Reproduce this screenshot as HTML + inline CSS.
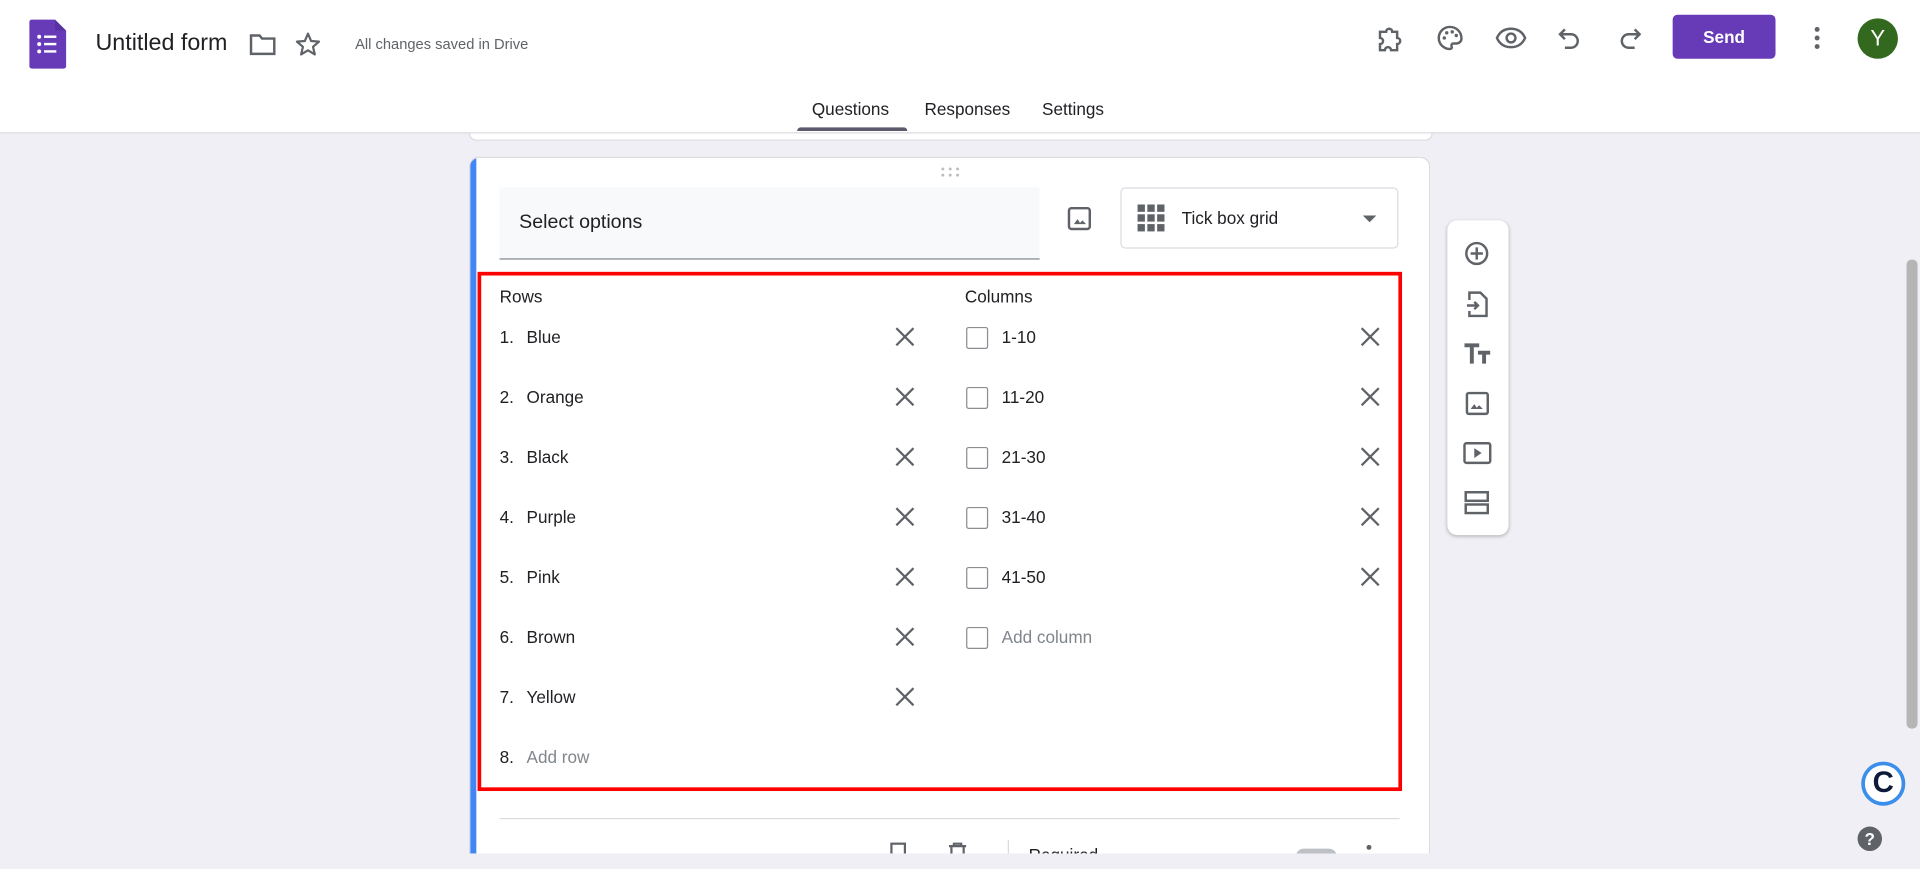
<!DOCTYPE html>
<html><head><meta charset="utf-8"><style>
html,body{margin:0;padding:0;width:1920px;height:869px;overflow:hidden;background:#f0eff5;font-family:"Liberation Sans",Arial,sans-serif;}
#w{position:absolute;left:0;top:0;width:1568px;height:710px;overflow:hidden;transform:scale(1.22449);transform-origin:0 0;}
.a{position:absolute}
.t{color:#202124;font-size:14px}
svg{position:absolute;overflow:visible}
.x{stroke:#5f6368;stroke-width:1.8;fill:none}
.cb{position:absolute;width:16px;height:16px;border:1.5px solid #8a8d91;border-radius:2px;box-sizing:border-box}
</style></head><body><div id="w">
<div class="a" style="left:0;top:0;width:1568px;height:108px;background:#fff;border-bottom:1px solid #dadce0"></div>
<svg style="left:24px;top:16px" width="30" height="40"><path d="M2 0H21L30 9V38a2 2 0 0 1-2 2H2a2 2 0 0 1-2-2V2a2 2 0 0 1 2-2z" fill="#673ab7"/><path d="M21 0V9H30z" fill="#4a2a8a" opacity=".5"/><g fill="#fff"><circle cx="8" cy="14" r="1.6"/><circle cx="8" cy="20" r="1.6"/><circle cx="8" cy="26" r="1.6"/><rect x="12" y="13" width="10" height="2"/><rect x="12" y="19" width="10" height="2"/><rect x="12" y="25" width="10" height="2"/></g></svg>
<div class="a" style="left:78px;top:25px;font-size:19px;color:#202124">Untitled form</div>
<svg style="left:204px;top:27px" width="22" height="18"><path d="M1 2h7l2 2.5h10v12.5H1z" fill="none" stroke="#5f6368" stroke-width="2"/></svg>
<svg style="left:241px;top:26px" width="21" height="20"><path d="M10.5 1.5l2.6 6 6.4.5-4.9 4.2 1.5 6.3-5.6-3.4-5.6 3.4 1.5-6.3L1.5 8l6.4-.5z" fill="none" stroke="#5f6368" stroke-width="1.8" stroke-linejoin="round"/></svg>
<div class="a" style="left:290px;top:29px;font-size:12px;color:#5f6368">All changes saved in Drive</div>
<svg style="left:1124px;top:20px" width="22" height="22"><path d="M3 6h5a2.5 2.5 0 0 1 5 0h4v5a2.5 2.5 0 0 1 0 5v5h-5a2.5 2.5 0 0 0-5 0H3v-5a2.5 2.5 0 0 0 0-5z" fill="none" stroke="#5f6368" stroke-width="2"/></svg>
<svg style="left:1173px;top:20px" width="22" height="22"><path d="M11 2a9 9 0 0 0 0 18c1.5 0 2-1 1.5-2s0-2.5 1.5-2.5h2.5a4 4 0 0 0 4-4C20.5 5.5 16 2 11 2z" fill="none" stroke="#5f6368" stroke-width="2"/><g fill="#5f6368"><circle cx="6.5" cy="11" r="1.4"/><circle cx="8.5" cy="6.8" r="1.4"/><circle cx="13" cy="6" r="1.4"/><circle cx="16.3" cy="9" r="1.4"/></g></svg>
<svg style="left:1221px;top:22px" width="26" height="18"><path d="M1.5 9C4 3.5 8 1.5 13 1.5s9 2 11.5 7.5C22 14.5 18 16.5 13 16.5S4 14.5 1.5 9z" fill="none" stroke="#5f6368" stroke-width="2"/><circle cx="13" cy="9" r="3.6" fill="none" stroke="#5f6368" stroke-width="2"/></svg>
<svg style="left:1272px;top:21px" width="20" height="20"><path d="M6 3L2 7l4 4M2 7h9a5.5 5.5 0 0 1 0 11H6" fill="none" stroke="#5f6368" stroke-width="2"/></svg>
<svg style="left:1321px;top:21px" width="20" height="20"><path d="M14 3l4 4-4 4M18 7H9a5.5 5.5 0 0 0 0 11h5" fill="none" stroke="#5f6368" stroke-width="2"/></svg>
<div class="a" style="left:1366px;top:12px;width:84px;height:36px;background:#673ab7;border-radius:4px;color:#fff;font-size:14px;font-weight:bold;text-align:center;line-height:36px">Send</div>
<svg style="left:1482px;top:21px" width="4" height="20"><circle cx="2" cy="3" r="2" fill="#5f6368"/><circle cx="2" cy="10" r="2" fill="#5f6368"/><circle cx="2" cy="17" r="2" fill="#5f6368"/></svg>
<div class="a" style="left:1517px;top:15px;width:33px;height:33px;border-radius:50%;background:#33691e;color:#fff;font-size:18px;text-align:center;line-height:33px">Y</div>
<div class="a" style="left:663px;top:81px;font-size:14px;color:#202124">Questions</div>
<div class="a" style="left:755px;top:81px;font-size:14px;color:#202124">Responses</div>
<div class="a" style="left:851px;top:81px;font-size:14px;color:#202124">Settings</div>
<div class="a" style="left:651px;top:104px;width:90px;height:3px;background:#5e5a6e;border-radius:3px 3px 0 0"></div>
<div class="a" style="left:383px;top:109px;width:785px;height:5px;background:#fff;border-radius:0 0 8px 8px;border:1px solid #dadce0;border-top:none"></div>
<div class="a" style="left:383px;top:128px;width:785px;height:569px;background:#fff;border-radius:8px 8px 0 0;border:1px solid #dadce0;border-bottom:none;box-sizing:border-box;overflow:hidden"><div style="position:absolute;left:0;top:0;width:5px;height:100%;background:#4285f4"></div></div>
<svg style="left:768px;top:136px" width="16" height="8"><g fill="#bdbdbd"><circle cx="2" cy="2" r="1.2"/><circle cx="8" cy="2" r="1.2"/><circle cx="14" cy="2" r="1.2"/><circle cx="2" cy="7" r="1.2"/><circle cx="8" cy="7" r="1.2"/><circle cx="14" cy="7" r="1.2"/></g></svg>
<div class="a" style="left:408px;top:153px;width:441px;height:58px;background:#f8f9fa;border-bottom:1px solid #80868b"></div>
<div class="a" style="left:424px;top:173px;font-size:16px;color:#202124">Select options</div>
<svg style="left:872px;top:169px" width="19" height="19"><rect x="1" y="1" width="17" height="17" rx="2" fill="none" stroke="#5f6368" stroke-width="2"/><path d="M5 14l3-4 2 3 2-2 3 3z" fill="#5f6368"/></svg>
<div class="a" style="left:915px;top:153px;width:227px;height:50px;border:1px solid #dadce0;border-radius:4px;box-sizing:border-box"></div>
<svg style="left:929px;top:167px" width="22" height="22"><g fill="#5f6368"><rect x="0" y="0" width="6" height="6"/><rect x="8" y="0" width="6" height="6"/><rect x="16" y="0" width="6" height="6"/><rect x="0" y="8" width="6" height="6"/><rect x="8" y="8" width="6" height="6"/><rect x="16" y="8" width="6" height="6"/><rect x="0" y="16" width="6" height="6"/><rect x="8" y="16" width="6" height="6"/><rect x="16" y="16" width="6" height="6"/></g></svg>
<div class="a" style="left:965px;top:170px;font-size:14px;color:#202124">Tick box grid</div>
<svg style="left:1113px;top:176px" width="12" height="6"><path d="M0 0h11L5.5 5.5z" fill="#5f6368"/></svg>
<div class="a" style="left:390px;top:222px;width:755px;height:424px;border:3px solid #f00;box-sizing:border-box"></div>
<div class="a t" style="left:408px;top:234px">Rows</div>
<div class="a t" style="left:788px;top:234px">Columns</div>
<div id="rows"></div>
<div class="a" style="left:408px;top:668px;width:735px;height:1px;background:#dadce0"></div>
<svg style="left:724px;top:688px" width="18" height="12"><rect x="4" y="1" width="11" height="14" fill="none" stroke="#5f6368" stroke-width="1.8"/></svg>
<svg style="left:773px;top:688px" width="18" height="12"><path d="M2 3h14M6 3V1h6v2M4 3v12h10V3" fill="none" stroke="#5f6368" stroke-width="1.8"/></svg>
<div class="a" style="left:823px;top:686px;width:1px;height:20px;background:#dadce0"></div>
<div class="a t" style="left:840px;top:690px">Required</div>
<div class="a" style="left:1058px;top:693px;width:34px;height:14px;border-radius:7px;background:#bdc1c6"></div>
<div class="a" style="left:1116px;top:690px;width:4px;height:4px;border-radius:50%;background:#5f6368"></div>
<div class="a" style="left:1182px;top:180px;width:50px;height:257px;background:#fff;border-radius:8px;box-shadow:0 1px 3px rgba(0,0,0,.25)"></div>
<svg style="left:1196px;top:197px" width="20" height="20"><circle cx="10" cy="10" r="8.5" fill="none" stroke="#5f6368" stroke-width="2"/><path d="M10 5v10M5 10h10" stroke="#5f6368" stroke-width="2"/></svg>
<svg style="left:1198px;top:238px" width="17" height="21"><path d="M2 7V1h9l5 5v14H2v-4" fill="none" stroke="#5f6368" stroke-width="2"/><path d="M0 11.5h9M6 8.5l3 3-3 3" fill="none" stroke="#5f6368" stroke-width="2"/></svg>
<svg style="left:1196px;top:281px" width="22" height="16"><path d="M0 1h12M6 1v15M11 7h10M16 7v9" stroke="#5f6368" stroke-width="3.2" fill="none"/></svg>
<svg style="left:1197px;top:320px" width="19" height="19"><rect x="1" y="1" width="17" height="17" rx="1.5" fill="none" stroke="#5f6368" stroke-width="2"/><path d="M4 14l3-4 2 3 2-2 3 3z" fill="#5f6368"/></svg>
<svg style="left:1195px;top:361px" width="23" height="18"><rect x="1" y="1" width="21" height="16" rx="1.5" fill="none" stroke="#5f6368" stroke-width="2"/><path d="M9 5v8l6-4z" fill="#5f6368"/></svg>
<svg style="left:1196px;top:401px" width="20" height="20"><rect x="1" y="1" width="18" height="7" fill="none" stroke="#5f6368" stroke-width="2"/><rect x="1" y="11" width="18" height="7" fill="none" stroke="#5f6368" stroke-width="2"/></svg>
<div class="a" style="left:1557px;top:212px;width:9px;height:383px;background:#b5b5b5;border-radius:4px"></div>
<div class="a" style="left:1520px;top:622px;width:30px;height:30px;border:3px solid #3b8eea;border-radius:50%;background:#fff;text-align:center;line-height:30px;font-size:24px;font-weight:bold;color:#0c1b3a">C</div>
<div class="a" style="left:1517px;top:675px;width:20px;height:20px;border-radius:50%;background:#5f6368;color:#fff;text-align:center;line-height:20px;font-size:14px;font-weight:bold">?</div>
<div class="a" style="left:0;top:697px;width:1568px;height:13px;background:#f0eff5"></div>
</div>
<script>
var r=["Blue","Orange","Black","Purple","Pink","Brown","Yellow"],c=["1-10","11-20","21-30","31-40","41-50"],h="";
var X=function(x,y){return '<svg style="left:'+(x-7)+'px;top:'+(y-7)+'px" width="14" height="14"><path class="x" d="M0 0L14 14M14 0L0 14"/></svg>';};
for(var i=0;i<8;i++){var y=275+49*i;
h+='<div class="a t" style="left:408px;top:'+(y-8)+'px">'+(i+1)+'.</div>';
if(i<7){h+='<div class="a t" style="left:430px;top:'+(y-8)+'px">'+r[i]+'</div>'+X(739,y);}
else h+='<div class="a" style="left:430px;top:'+(y-8)+'px;font-size:14px;color:#80868b">Add row</div>';
if(i<6){h+='<div class="cb" style="left:789px;top:'+(y-8)+'px;width:18px;height:18px"></div>';
if(i<5)h+='<div class="a t" style="left:818px;top:'+(y-8)+'px">'+c[i]+'</div>'+X(1119,y);
else h+='<div class="a" style="left:818px;top:'+(y-8)+'px;font-size:14px;color:#80868b">Add column</div>';}}
document.getElementById("rows").outerHTML=h;
</script>
</body></html>
